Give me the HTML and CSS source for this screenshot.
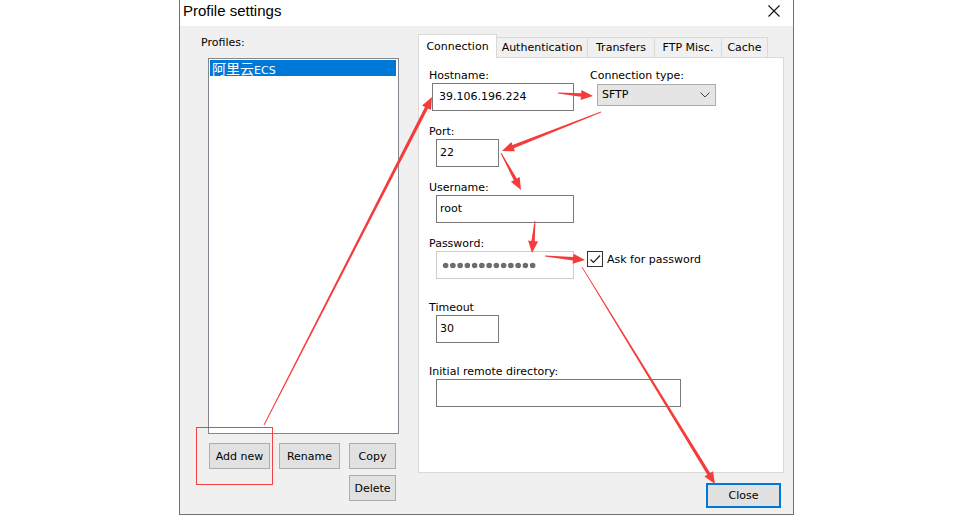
FILE: index.html
```html
<!DOCTYPE html>
<html lang="en">

<head>
    <meta charset="UTF-8">
    <title>Profile settings</title>
    <link rel="stylesheet" href="styles.css">
</head>

<body>
    <div class="dialog">
        <div class="titlebar">
            <span class="title">Profile settings</span>
            <svg class="close-x" width="12" height="12" viewBox="0 0 12 12">
                <path d="M0.5 0.5L11.5 11.5M11.5 0.5L0.5 11.5" stroke="#111" stroke-width="1.1" fill="none" />
            </svg>
        </div>

        <div class="dialog-body">
            <!-- profile list -->
            <div class="profiles">
                <div class="label">Profiles:</div>
                <div class="listbox">
                    <div class="list-item selected"><span class="cjk">阿里云</span>ECS</div>
                </div>
                <div class="profile-buttons">
                    <div class="btn-row">
                        <button class="btn btn-wide">Add new</button>
                        <button class="btn btn-wide">Rename</button>
                        <button class="btn btn-small">Copy</button>
                    </div>
                    <div class="btn-row btn-row-end">
                        <button class="btn btn-small">Delete</button>
                    </div>
                </div>
            </div>

            <!-- settings tabs -->
            <div class="settings">
                <div class="tabstrip">
                    <div class="tab active">Connection</div>
                    <div class="tab tab-auth">Authentication</div>
                    <div class="tab tab-transfers">Transfers</div>
                    <div class="tab tab-ftp">FTP Misc.</div>
                    <div class="tab tab-cache">Cache</div>
                </div>

                <div class="tab-panel">
                    <div class="row">
                        <div class="field field-host">
                            <div class="label">Hostname:</div>
                            <div class="input input-host">39.106.196.224</div>
                        </div>
                        <div class="field field-type">
                            <div class="label">Connection type:</div>
                            <div class="combo">
                                <span>SFTP</span>
                                <svg width="10" height="6" viewBox="0 0 10 6">
                                    <path d="M0.5 0.5L5 5L9.5 0.5" stroke="#444" fill="none" />
                                </svg>
                            </div>
                        </div>
                    </div>

                    <div class="field">
                        <div class="label">Port:</div>
                        <div class="input input-short">22</div>
                    </div>

                    <div class="field">
                        <div class="label">Username:</div>
                        <div class="input input-mid">root</div>
                    </div>

                    <div class="field">
                        <div class="label">Password:</div>
                        <div class="pw-row">
                            <div class="input input-mid input-disabled">
                                <div class="pw-dots"></div>
                            </div>
                            <div class="checkbox-wrap">
                                <div class="checkbox">
                                    <svg width="14" height="14" viewBox="0 0 14 14">
                                        <path d="M2.5 7.5L5.5 10.5L12 3.5" stroke="#222" stroke-width="1.2" fill="none" />
                                    </svg>
                                </div>
                                <span>Ask for password</span>
                            </div>
                        </div>
                    </div>

                    <div class="field field-gap">
                        <div class="label">Timeout</div>
                        <div class="input input-short">30</div>
                    </div>

                    <div class="field field-gap">
                        <div class="label">Initial remote directory:</div>
                        <div class="input input-long"></div>
                    </div>
                </div>

                <button class="btn btn-close">Close</button>
            </div>
        </div>
    </div>

    <!-- red annotations drawn over the screenshot -->
    <svg class="annotations" id="annotations" width="960" height="521" viewBox="0 0 960 521">
        <rect x="196.5" y="427.5" width="76" height="57" fill="none" stroke="#ef4444" stroke-width="1" />
    </svg>

    <script>
        const arrows = [
            [264, 425, 432, 97],
            [558, 93, 593, 96],
            [601, 112, 502, 151],
            [501, 153, 521, 190],
            [535, 221, 532, 253],
            [545, 256, 585, 260],
            [582, 267, 715, 484],
        ];

        function arrowPoints(x1, y1, x2, y2) {
            const dx = x2 - x1, dy = y2 - y1;
            const len = Math.sqrt(dx * dx + dy * dy);
            const ux = dx / len, uy = dy / len;
            const nx = -uy, ny = ux;
            const head = 12, headW = 5, tailW = 0.4, neckW = 1.7;
            const bx = x2 - ux * head, by = y2 - uy * head;
            const pts = [
                [x1 + nx * tailW, y1 + ny * tailW],
                [bx + nx * neckW, by + ny * neckW],
                [bx + nx * headW, by + ny * headW],
                [x2, y2],
                [bx - nx * headW, by - ny * headW],
                [bx - nx * neckW, by - ny * neckW],
                [x1 - nx * tailW, y1 - ny * tailW],
            ];
            return pts.map(p => p[0].toFixed(1) + ',' + p[1].toFixed(1)).join(' ');
        }

        const svg = document.getElementById('annotations');
        arrows.forEach(a => {
            const poly = document.createElementNS('http://www.w3.org/2000/svg', 'polygon');
            poly.setAttribute('points', arrowPoints(a[0], a[1], a[2], a[3]));
            poly.setAttribute('fill', '#f43c3c');
            svg.appendChild(poly);
        });
    </script>
</body>

</html>
```

FILE: styles.css
```css
body {
    margin: 0;
    background-color: #fff;
    font-family: "DejaVu Sans", sans-serif;
    font-size: 11px;
    color: #000;
    position: relative;
    width: 960px;
    height: 521px;
    overflow: hidden;
}

.dialog {
    margin-left: 179px;
    width: 615px;
    box-sizing: border-box;
    border: 1px solid #707070;
    border-top: none;
}

.titlebar {
    height: 26px;
    background-color: #fff;
    display: flex;
    justify-content: space-between;
    align-items: flex-start;
    padding-left: 3px;
}

.title {
    font-family: "Liberation Sans", Arial, sans-serif;
    font-size: 15px;
    line-height: 22px;
}

.close-x {
    margin-top: 5px;
    margin-right: 13px;
}

.dialog-body {
    height: 488px;
    background-color: #f0f0f0;
    display: flex;
}

.label {
    line-height: 14px;
    height: 14px;
    white-space: nowrap;
}

/* left column */

.profiles {
    width: 238px;
    box-sizing: border-box;
    padding: 10px 0 0 21px;
}

.listbox {
    margin: 8px 0 0 7px;
    width: 191px;
    height: 376px;
    box-sizing: border-box;
    border: 1px solid #828790;
    background-color: #fff;
    padding: 1px;
}

.list-item {
    height: 16px;
    line-height: 16px;
    margin-right: 1px;
    padding-left: 2px;
    white-space: nowrap;
}

.list-item.selected {
    background-color: #0078d7;
    color: #fff;
}

.cjk {
    font-family: "Noto Sans CJK SC", sans-serif;
    font-size: 14px;
}

.profile-buttons {
    margin: 9px 0 0 8px;
    width: 187px;
}

.btn-row {
    display: flex;
    gap: 9px;
}

.btn-row-end {
    justify-content: flex-end;
    margin-top: 6px;
}

.btn {
    height: 26px;
    padding: 0;
    border: 1px solid #adadad;
    background-color: #e1e1e1;
    font-family: "DejaVu Sans", sans-serif;
    font-size: 11px;
    color: #000;
    box-sizing: border-box;
}

.btn-wide {
    width: 61px;
}

.btn-small {
    width: 47px;
}

/* right column */

.settings {
    width: 366px;
    padding-top: 8px;
    display: flex;
    flex-direction: column;
}

.tabstrip {
    display: flex;
    align-items: flex-end;
    height: 23px;
    position: relative;
    z-index: 1;
}

.tab {
    height: 20px;
    box-sizing: border-box;
    border: 1px solid #d9d9d9;
    border-left: none;
    border-bottom: none;
    background-color: #f0f0f0;
    display: flex;
    align-items: center;
    justify-content: center;
    white-space: nowrap;
}

.tab.active {
    width: 79px;
    height: 24px;
    margin-bottom: -1px;
    border-left: 1px solid #d9d9d9;
    background-color: #fff;
}

.tab-auth {
    width: 91px;
}

.tab-transfers,
.tab-ftp {
    width: 67px;
}

.tab-cache {
    width: 46px;
}

.tab-panel {
    height: 416px;
    box-sizing: border-box;
    border: 1px solid #d9d9d9;
    background-color: #fff;
    padding: 11px 10px;
}

.row {
    display: flex;
}

.field {
    margin-bottom: 14px;
}

.field-gap {
    margin-top: 22px;
}

.field-host {
    width: 145px;
}

.field-type {
    margin-left: 16px;
}

.input {
    margin-left: 7px;
    height: 28px;
    box-sizing: border-box;
    border: 1px solid #7a7a7a;
    background-color: #fff;
    display: flex;
    align-items: center;
    padding: 0 0 2px 3px;
    white-space: nowrap;
}

.input-host {
    margin-left: 3px;
    width: 142px;
    padding-left: 6px;
}

.input-short {
    width: 63px;
}

.input-mid {
    width: 138px;
}

.input-long {
    width: 245px;
}

.input-disabled {
    border-color: #cccccc;
    padding-bottom: 0;
}

.pw-dots {
    width: 94px;
    height: 7px;
    margin-left: 2px;
    background: radial-gradient(circle, #6d6d6d 2.6px, transparent 3.1px) 0 0 / 7.25px 7px repeat-x;
}

.combo {
    margin: 1px 0 0 7px;
    width: 119px;
    height: 22px;
    box-sizing: border-box;
    border: 1px solid #adadad;
    background-color: #e5e5e5;
    display: flex;
    align-items: center;
    justify-content: space-between;
    padding: 0 5px 1px 4px;
}

.pw-row {
    display: flex;
    align-items: flex-start;
}

.checkbox-wrap {
    display: flex;
    align-items: center;
    margin-left: 13px;
    height: 16px;
}

.checkbox {
    width: 16px;
    height: 16px;
    box-sizing: border-box;
    border: 1px solid #333;
    background-color: #fff;
    margin-right: 4px;
}

.checkbox svg {
    display: block;
}

.btn-close {
    margin: 10px 3px 0 auto;
    width: 75px;
    height: 25px;
    border: 2px solid #0078d7;
}

.annotations {
    position: absolute;
    left: 0;
    top: 0;
    pointer-events: none;
}
```
